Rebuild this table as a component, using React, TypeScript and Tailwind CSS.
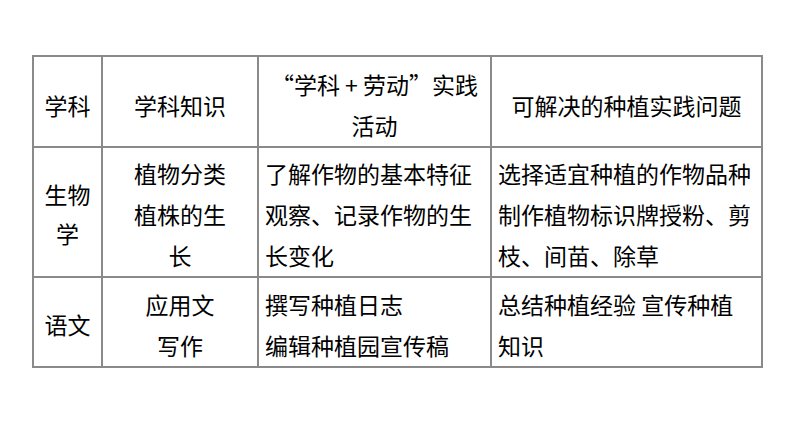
import React from "react";

const rows = [
  {
    h: "h-[90px]",
    pad: "pt-[7px]",
    cells: [
      { lines: ["学科"], center: true },
      { lines: ["学科知识"], center: true },
      { lines: ["“学科 + 劳动”实践", "活动"], center: true },
      { lines: ["可解决的种植实践问题"], center: true },
    ],
  },
  {
    h: "h-[130px]",
    pad: "pt-[4px]",
    cells: [
      { lines: ["生物", "学"], center: true, tight: true },
      { lines: ["植物分类", "植株的生", "长"], center: true },
      { lines: ["了解作物的基本特征", "观察、记录作物的生", "长变化"], center: false },
      { lines: ["选择适宜种植的作物品种", "制作植物标识牌授粉、剪", "枝、间苗、除草"], center: false },
    ],
  },
  {
    h: "h-[90px]",
    pad: "pt-[5px]",
    cells: [
      { lines: ["语文"], center: true },
      { lines: ["应用文", "写作"], center: true },
      { lines: ["撰写种植日志", "编辑种植园宣传稿"], center: false },
      { lines: ["总结种植经验 宣传种植", "知识"], center: false },
    ],
  },
];

const App = () => {
  return (
    <div
      className="w-[794px] h-[447px] bg-white pl-[32px] pt-[55px]"
      style={{ fontFamily: '"Noto Sans CJK SC", "Noto Sans", sans-serif' }}
    >
      <table className="table-fixed border-collapse w-[731px] text-[23px] text-black">
        <colgroup>
          <col className="w-[69px]" />
          <col className="w-[156px]" />
          <col className="w-[233px]" />
          <col className="w-[271px]" />
        </colgroup>
        <tbody>
          {rows.map((row, i) => (
            <tr key={i} className={row.h}>
              {row.cells.map((cell, j) => (
                <td
                  key={j}
                  className={`border-2 border-[#8a8a8a] align-middle ${row.pad} pb-0 whitespace-nowrap ${
                    cell.tight ? "leading-[39px]" : "leading-[41px]"
                  } ${cell.center ? "text-center px-0" : "text-left pl-[6px] pr-0"}`}
                >
                  {cell.lines.map((line, k) => (
                    <div key={k}>{line}</div>
                  ))}
                </td>
              ))}
            </tr>
          ))}
        </tbody>
      </table>
    </div>
  );
};

export default App;
